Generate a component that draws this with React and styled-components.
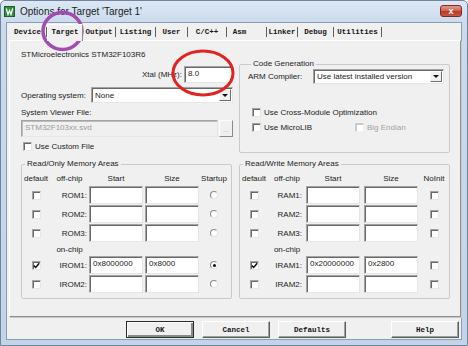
import React from "react";
import styled, { createGlobalStyle, css } from "styled-components";

const GlobalStyle = createGlobalStyle`
  html, body { margin: 0; padding: 0; background: #ffffff; }
  body { font-family: "Liberation Sans", Arial, sans-serif; color: #222; }
`;

const sunken = css`
  box-sizing: border-box;
  background: #fff;
  border: 1px solid;
  border-color: #a3a3a3 #e6e6e6 #e6e6e6 #a3a3a3;
  box-shadow: inset 1px 1px 0 #696969;
`;

const Window = styled.div`
  position: relative;
  width: 468px;
  height: 346px;
  box-sizing: border-box;
  display: flex;
  flex-direction: column;
  background: linear-gradient(180deg, #dce7f4 0px, #cadbed 22px, #c2d4e8 100%);
  border: 1px solid #71849c;
  border-radius: 5px 5px 0 0;
  padding: 0 5px 5px 5px;
  overflow: hidden;
`;

const TitleBar = styled.div`
  height: 21px;
  display: flex;
  align-items: center;
`;

const AppIcon = styled.svg`
  width: 11px;
  height: 11px;
  margin-left: -2px;
  flex: none;
`;

const Title = styled.div`
  margin-left: 5px;
  font-size: 10px;
  color: #1c1c1c;
`;

const CloseBtn = styled.div`
  margin-left: auto;
  align-self: flex-start;
  margin-top: 4px;
  width: 22px;
  height: 12px;
  box-sizing: border-box;
  border: 1px solid #7d2a22;
  border-radius: 3px;
  background: linear-gradient(180deg, #e59a8e 0%, #d16352 45%, #bd3a28 55%, #c9553f 100%);
  display: flex;
  align-items: center;
  justify-content: center;
  color: #fff;
  font-size: 9px;
  font-weight: bold;
  line-height: 1;
`;

const Client = styled.div`
  flex: 1;
  display: flex;
  flex-direction: column;
  background: #f0f0f0;
  border: 1px solid #8b9db4;
  padding: 0 1px 1px 1px;
`;

const TabRow = styled.div`
  height: 17px;
  display: flex;
  align-items: flex-end;
  padding-left: 1px;
  position: relative;
  z-index: 1;
`;

const Tab = styled.div`
  box-sizing: border-box;
  width: ${(p) => p.$w}px;
  padding-right: ${(p) => p.$pr || 0}px;
  text-align: center;
  font-family: "Liberation Mono", "Courier New", monospace;
  font-size: 7.5px;
  font-weight: bold;
  color: #151515;
  white-space: nowrap;
  ${(p) =>
    p.$active
      ? css`
          height: 17px;
          line-height: 15px;
          margin-bottom: -1px;
          background: #f0f0f0;
          border: 1px solid;
          border-color: #ffffff #8c8c8c transparent #ffffff;
          border-bottom: none;
        `
      : css`
          height: 10px;
          line-height: 10px;
          margin-bottom: 3px;
          border-right: 1px solid #5e5e5e;
        `}
`;

const Panel = styled.div`
  box-sizing: border-box;
  margin-left: 1px;
  width: 452px;
  height: 277px;
  border: 1px solid;
  border-color: #ffffff #8f8f8f #8f8f8f #ffffff;
  box-shadow: 1px 1px 0 #c8c8c8;
  padding: 8px 10px 0 11px;
  display: flex;
  flex-direction: column;
`;

const TopSection = styled.div`
  display: flex;
  gap: 6px;
`;

const LeftCol = styled.div`
  width: 213px;
  display: flex;
  flex-direction: column;
`;

const Text = styled.div`
  font-size: 8px;
  line-height: ${(p) => p.$lh || 11}px;
  color: ${(p) => (p.$muted ? "#a2a2a2" : "#222")};
  white-space: nowrap;
  margin-top: ${(p) => p.$mt || 0}px;
  margin-left: ${(p) => p.$ml || 0}px;
`;

const FieldRow = styled.div`
  display: flex;
  align-items: center;
  height: ${(p) => p.$h}px;
  margin-top: ${(p) => p.$mt || 0}px;
  justify-content: ${(p) => (p.$end ? "flex-end" : "flex-start")};
`;

const Label = styled.span`
  font-size: 8px;
  color: #222;
  white-space: nowrap;
  margin-right: ${(p) => p.$mr || 0}px;
`;

const TextBox = styled.div`
  ${sunken};
  width: ${(p) => (p.$w ? `${p.$w}px` : "auto")};
  flex: ${(p) => (p.$grow ? 1 : "none")};
  height: ${(p) => p.$h || 18}px;
  font-size: 8px;
  line-height: 10px;
  padding: 2px 0 0 3px;
  white-space: nowrap;
  overflow: hidden;
  color: #222;
  ${(p) =>
    p.$disabled &&
    css`
      background: #f0f0f0;
      color: #9a9a9a;
      box-shadow: inset 1px 1px 0 #bdbdbd;
    `}
`;

const Select = styled.div`
  ${sunken};
  width: ${(p) => p.$w}px;
  height: ${(p) => p.$h || 16}px;
  display: flex;
  align-items: center;
  padding: 0 1px 0 3px;
  font-size: 8px;
  color: #222;
  margin-left: ${(p) => (p.$auto ? "auto" : "0")};
`;

const SelectText = styled.span`
  flex: 1;
  white-space: nowrap;
`;

const ArrowBtn = styled.div`
  box-sizing: border-box;
  width: 12px;
  align-self: stretch;
  margin: 1px 0;
  background: #f0f0f0;
  border: 1px solid;
  border-color: #fdfdfd #6e6e6e #6e6e6e #fdfdfd;
  display: flex;
  align-items: center;
  justify-content: center;
  &::after {
    content: "";
    border-left: 3px solid transparent;
    border-right: 3px solid transparent;
    border-top: 3px solid #111;
  }
`;

const BrowseBtn = styled.div`
  box-sizing: border-box;
  width: 14px;
  height: 17px;
  margin-left: 1px;
  background: #f0f0f0;
  border: 1px solid;
  border-color: #fdfdfd #8a8a8a #8a8a8a #fdfdfd;
  font-size: 7px;
  color: #aaa;
  text-align: center;
  line-height: 18px;
`;

const CheckBox = styled.span`
  ${sunken};
  width: 9px;
  height: 9px;
  flex: none;
  display: inline-flex;
  align-items: center;
  justify-content: center;
  ${(p) =>
    p.$disabled &&
    css`
      border-color: #cfcfcf #f2f2f2 #f2f2f2 #cfcfcf;
      box-shadow: inset 1px 1px 0 #c4c4c4;
    `}
`;

const CheckItem = styled.div`
  display: flex;
  align-items: center;
  gap: 3px;
  width: ${(p) => (p.$w ? `${p.$w}px` : "auto")};
`;

const Radio = styled.span`
  box-sizing: border-box;
  width: 8px;
  height: 8px;
  border-radius: 50%;
  border: 1px solid;
  border-color: #8a8a8a #e4e4e4 #e4e4e4 #8a8a8a;
  background: #fff;
  display: inline-flex;
  align-items: center;
  justify-content: center;
  &::after {
    content: "";
    width: 3px;
    height: 3px;
    border-radius: 50%;
    background: ${(p) => (p.$on ? "#111" : "transparent")};
  }
`;

const Group = styled.fieldset`
  box-sizing: border-box;
  margin: ${(p) => p.$mt || 0}px 0 0 0;
  padding: 0 ${(p) => p.$pr || 0}px 0 ${(p) => p.$pl || 0}px;
  width: ${(p) => p.$w}px;
  height: ${(p) => p.$h}px;
  border: 1px solid #cacaca;
  border-radius: 2px;
  min-width: 0;
`;

const Legend = styled.legend`
  font-size: 8px;
  line-height: 10px;
  padding: 0 2px;
  margin-left: 3px;
  color: #222;
`;

const BottomSection = styled.div`
  display: flex;
  gap: 7px;
  margin-top: 6px;
`;

const MemGrid = styled.div`
  display: grid;
  grid-template-columns: ${(p) => p.$cols};
  grid-template-rows: 14px 18px 18px 18px 12px 18px 18px;
  column-gap: ${(p) => p.$gap}px;
  row-gap: 1px;
  margin-top: 2px;
`;

const Cell = styled.div`
  display: flex;
  align-items: center;
  justify-content: ${(p) => p.$justify || "center"};
  font-size: 8px;
  color: #222;
  white-space: nowrap;
`;

const ButtonRow = styled.div`
  display: flex;
  gap: 8px;
  margin-top: 4px;
  padding-left: 118px;
  padding-right: 1px;
`;

const DlgButton = styled.div`
  box-sizing: border-box;
  width: 68px;
  height: 17px;
  background: #f0f0f0;
  border: 1px solid;
  border-color: #ffffff #5c5c5c #5c5c5c #ffffff;
  box-shadow: inset -1px -1px 0 #a0a0a0;
  font-family: "Liberation Mono", "Courier New", monospace;
  font-size: 7.5px;
  font-weight: bold;
  color: #151515;
  display: flex;
  align-items: center;
  justify-content: center;
  margin-left: ${(p) => (p.$push ? "auto" : "0")};
  ${(p) =>
    p.$default &&
    css`
      outline: 1px solid #2a2a2a;
      outline-offset: -1px;
      box-shadow: inset 1px 1px 0 #fff, inset -2px -2px 0 #8a8a8a;
    `}
`;

const Marks = styled.svg`
  position: absolute;
  top: -1px;
  left: -1px;
  width: 468px;
  height: 346px;
  pointer-events: none;
`;

const Check = ({ checked, disabled }) => (
  <CheckBox $disabled={disabled}>
    {checked && (
      <svg width="7" height="7" viewBox="0 0 7 7">
        <path d="M0.8 3.6 L2.7 5.5 L6.2 1.2" stroke="#111" strokeWidth="1.5" fill="none" />
      </svg>
    )}
  </CheckBox>
);

const tabs = [
  { name: "Device", w: 38 },
  { name: "Target", w: 36, active: true },
  { name: "Output", w: 33 },
  { name: "Listing", w: 40 },
  { name: "User", w: 32 },
  { name: "C/C++", w: 39 },
  { name: "Asm", w: 40, pr: 14 },
  { name: "Linker", w: 31 },
  { name: "Debug", w: 36 },
  { name: "Utilities", w: 48 },
];

const MemoryGroup = ({ title, prefix, rows, lastHead, lastKind, cols, gap }) => (
  <Group $w={211} $h={140} $pl={0}>
    <Legend>{title}</Legend>
    <MemGrid $cols={cols} $gap={gap}>
      <Cell>default</Cell>
      <Cell>off-chip</Cell>
      <Cell>Start</Cell>
      <Cell>Size</Cell>
      <Cell>{lastHead}</Cell>
      {rows.map((r, i) =>
        r.divider ? (
          <React.Fragment key={i}>
            <Cell />
            <Cell>on-chip</Cell>
            <Cell />
            <Cell />
            <Cell />
          </React.Fragment>
        ) : (
          <React.Fragment key={i}>
            <Cell>
              <Check checked={r.on} />
            </Cell>
            <Cell $justify="flex-end">{prefix}{r.name}:</Cell>
            <TextBox>{r.start}</TextBox>
            <TextBox>{r.size}</TextBox>
            <Cell>{lastKind === "radio" ? <Radio $on={r.on} /> : <Check />}</Cell>
          </React.Fragment>
        )
      )}
    </MemGrid>
  </Group>
);

const romRows = [
  { name: "ROM1" },
  { name: "ROM2" },
  { name: "ROM3" },
  { divider: true },
  { name: "IROM1", on: true, start: "0x8000000", size: "0x8000" },
  { name: "IROM2" },
];

const ramRows = [
  { name: "RAM1" },
  { name: "RAM2" },
  { name: "RAM3" },
  { divider: true },
  { name: "IRAM1", on: true, start: "0x20000000", size: "0x2800" },
  { name: "IRAM2" },
];

export default function App() {
  return (
    <>
      <GlobalStyle />
      <Window>
        <TitleBar>
          <AppIcon viewBox="0 0 11 11">
            <rect x="0.5" y="0.5" width="10" height="10" fill="#2f8f3a" stroke="#1d5e25" />
            <path d="M2.3 2.5 L4 8.5 L5.5 4.5 L7 8.5 L8.7 2.5" stroke="#fff" strokeWidth="1.3" fill="none" />
          </AppIcon>
          <Title>Options for Target 'Target 1'</Title>
          <CloseBtn>x</CloseBtn>
        </TitleBar>
        <Client>
          <TabRow>
            {tabs.map((t) => (
              <Tab key={t.name} $w={t.w} $pr={t.pr} $active={t.active}>
                {t.name}
              </Tab>
            ))}
          </TabRow>
          <Panel>
            <TopSection>
              <LeftCol>
                <Text>STMicroelectronics STM32F103R6</Text>
                <FieldRow $h={17} $mt={6} $end>
                  <Label $mr={2}>Xtal (MHz):</Label>
                  <TextBox $w={49} $h={17}>8.0</TextBox>
                </FieldRow>
                <FieldRow $h={16} $mt={4}>
                  <Label>Operating system:</Label>
                  <Select $w={142} $auto>
                    <SelectText>None</SelectText>
                    <ArrowBtn />
                  </Select>
                </FieldRow>
                <Text $mt={5} $lh={10}>System Viewer File:</Text>
                <FieldRow $h={17} $mt={2}>
                  <TextBox $grow $h={17} $disabled>STM32F103xx.svd</TextBox>
                  <BrowseBtn>...</BrowseBtn>
                </FieldRow>
                <FieldRow $h={11} $mt={4}>
                  <CheckItem style={{ marginLeft: 2 }}>
                    <Check />
                    <Label>Use Custom File</Label>
                  </CheckItem>
                </FieldRow>
              </LeftCol>
              <Group $w={212} $h={94} $mt={10} $pl={8} $pr={5}>
                <Legend>Code Generation</Legend>
                <FieldRow $h={15}>
                  <Label>ARM Compiler:</Label>
                  <Select $w={131} $h={15} $auto>
                    <SelectText>Use latest installed version</SelectText>
                    <ArrowBtn />
                  </Select>
                </FieldRow>
                <FieldRow $h={11} $mt={23}>
                  <CheckItem style={{ marginLeft: 4 }}>
                    <Check />
                    <Label>Use Cross-Module Optimization</Label>
                  </CheckItem>
                </FieldRow>
                <FieldRow $h={11} $mt={4}>
                  <CheckItem $w={103} style={{ marginLeft: 4 }}>
                    <Check />
                    <Label>Use MicroLIB</Label>
                  </CheckItem>
                  <CheckItem>
                    <Check disabled />
                    <Text $muted>Big Endian</Text>
                  </CheckItem>
                </FieldRow>
              </Group>
            </TopSection>
            <BottomSection>
              <MemoryGroup
                title="Read/Only Memory Areas"
                prefix=""
                rows={romRows}
                lastHead="Startup"
                lastKind="radio"
                cols="28px 35px 54px 54px 26px"
                gap={2}
              />
              <MemoryGroup
                title="Read/Write Memory Areas"
                prefix=""
                rows={ramRows}
                lastHead="NoInit"
                lastKind="check"
                cols="28px 30px 54px 54px 24px"
                gap={4}
              />
            </BottomSection>
          </Panel>
          <ButtonRow>
            <DlgButton $default>OK</DlgButton>
            <DlgButton>Cancel</DlgButton>
            <DlgButton>Defaults</DlgButton>
            <DlgButton $push>Help</DlgButton>
          </ButtonRow>
        </Client>
        <Marks viewBox="0 0 468 346">
          <ellipse cx="62.5" cy="31" rx="19.5" ry="18.5" fill="none" stroke="#a24bb3" strokeWidth="3.5" />
          <ellipse cx="203" cy="73" rx="30" ry="22" fill="none" stroke="#e3231f" strokeWidth="3" />
        </Marks>
      </Window>
    </>
  );
}
